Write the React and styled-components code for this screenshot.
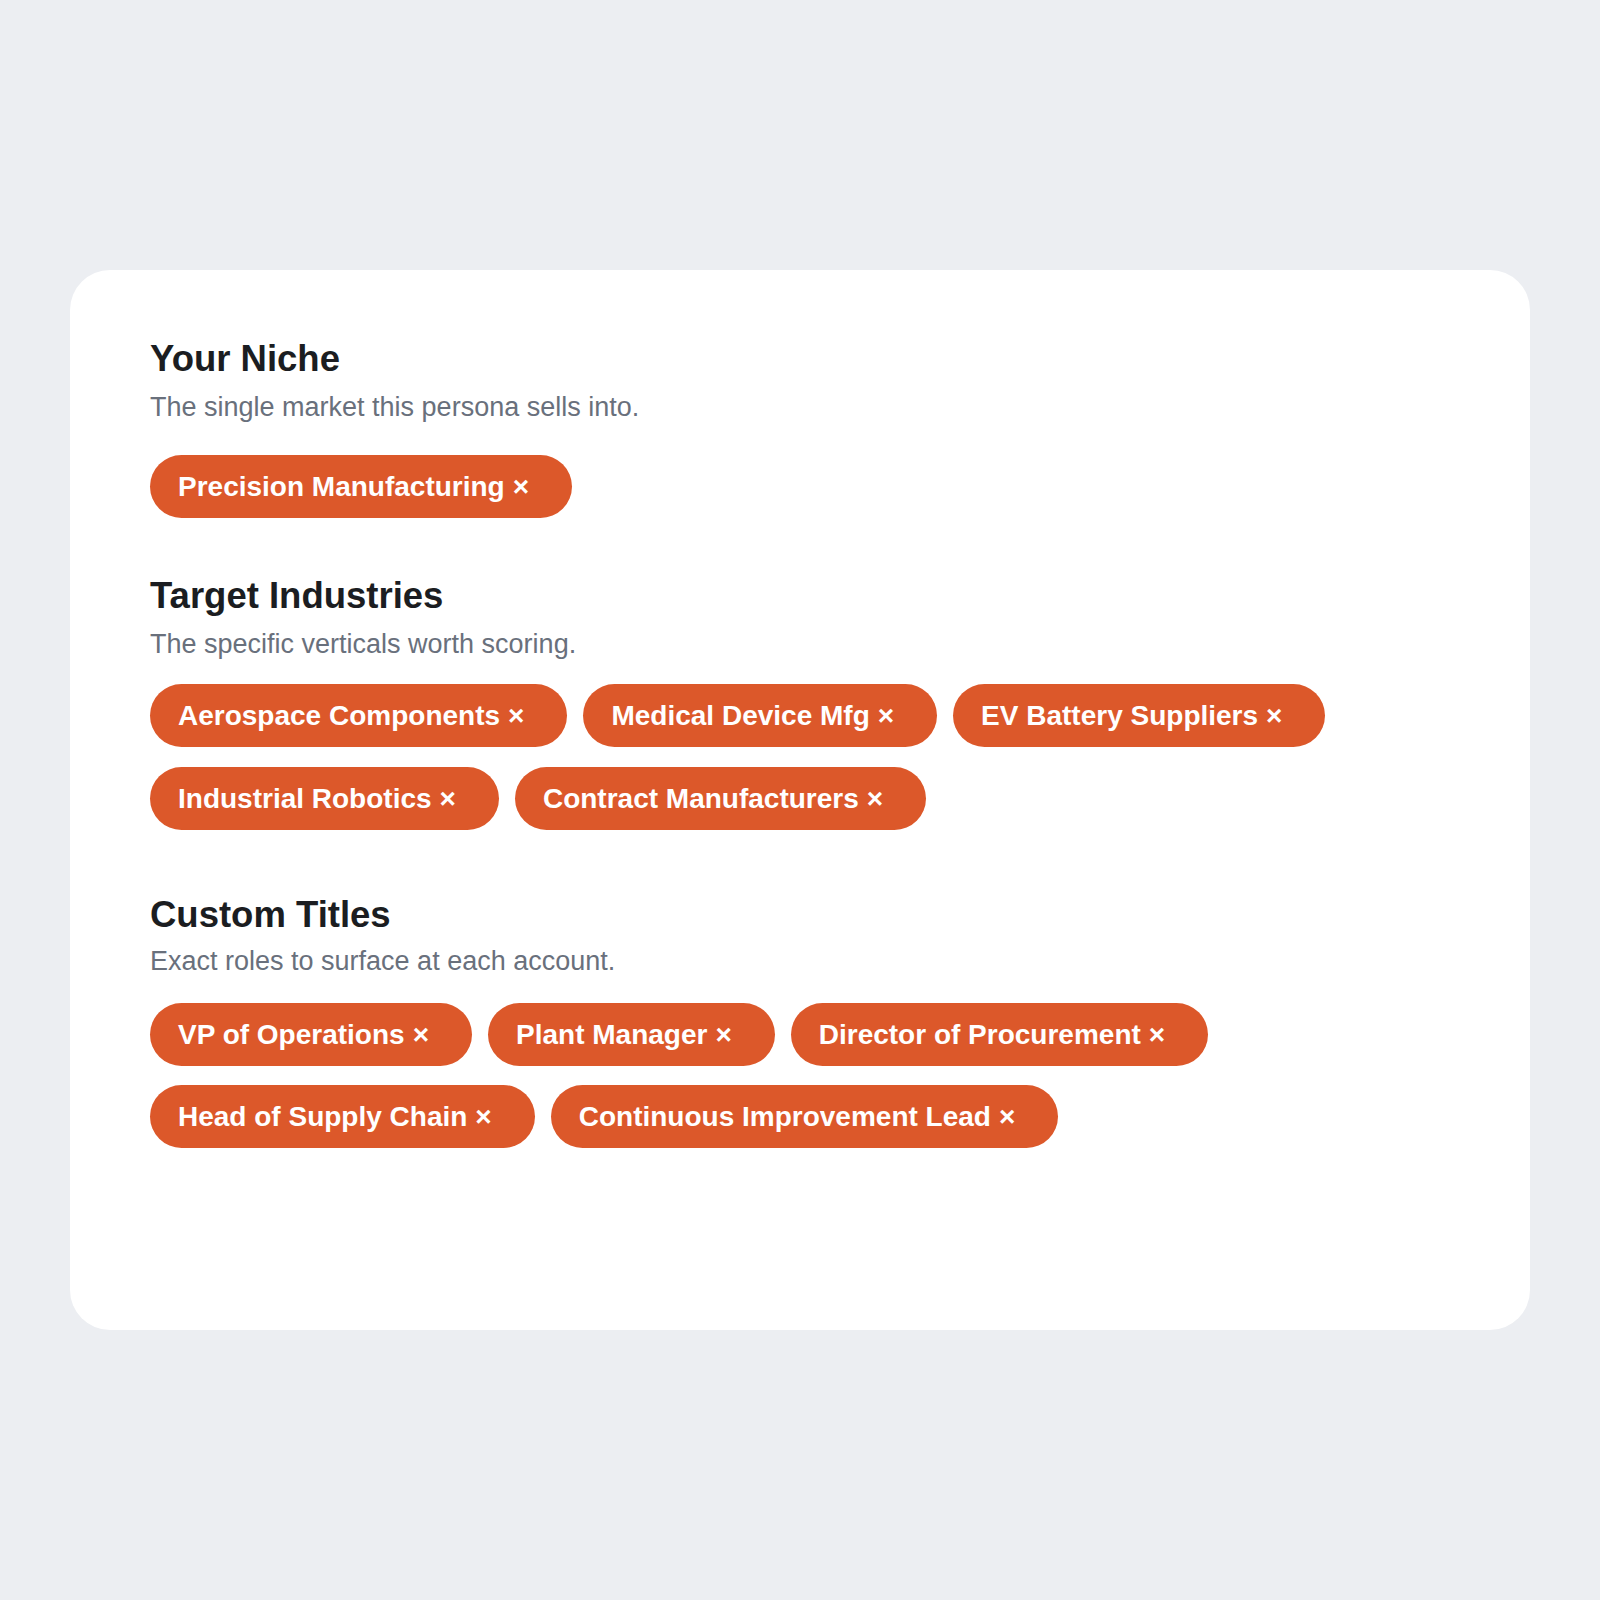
import React from "react";
import styled, { createGlobalStyle } from "styled-components";

const GlobalStyle = createGlobalStyle`
  * { box-sizing: border-box; }
  html, body { margin: 0; padding: 0; background: #eceef2; }
  body { font-family: "Liberation Sans", Arial, Helvetica, sans-serif; }
`;

const Page = styled.div`
  min-height: 1600px;
  display: flex;
  align-items: center;
  justify-content: center;
`;

const Card = styled.div`
  width: 1460px;
  min-height: 1060px;
  background: #ffffff;
  border-radius: 40px;
  padding: 67px 80px 80px;
  display: flex;
  flex-direction: column;
`;

const Section = styled.section`
  display: flex;
  flex-direction: column;
  margin-bottom: ${(p) => p.$after}px;
`;

const Title = styled.h2`
  margin: 0;
  font-size: 36.5px;
  line-height: 44px;
  font-weight: 700;
  color: #1b1d21;
`;

const Subtitle = styled.p`
  margin: ${(p) => p.$gap}px 0 0;
  font-size: 27px;
  line-height: 36px;
  font-weight: 400;
  color: #69707c;
`;

const ChipList = styled.div`
  display: flex;
  flex-wrap: wrap;
  gap: ${(p) => p.$rowGap}px 16px;
  margin-top: ${(p) => p.$top}px;
`;

const Chip = styled.span`
  display: inline-flex;
  align-items: center;
  height: 63px;
  padding: 0 43px 0 28px;
  border-radius: 999px;
  background: #dc582a;
  color: #ffffff;
  font-size: 28px;
  line-height: 35px;
  font-weight: 700;
  white-space: nowrap;
`;

const Remove = styled.button`
  all: unset;
  margin-left: 8px;
  font: inherit;
  color: inherit;
  cursor: pointer;
`;

const sections = [
  {
    title: "Your Niche",
    subtitle: "The single market this persona sells into.",
    items: ["Precision Manufacturing"],
    subGap: 8,
    top: 30,
    rowGap: 20,
    after: 56,
  },
  {
    title: "Target Industries",
    subtitle: "The specific verticals worth scoring.",
    items: [
      "Aerospace Components",
      "Medical Device Mfg",
      "EV Battery Suppliers",
      "Industrial Robotics",
      "Contract Manufacturers",
    ],
    subGap: 8,
    top: 22,
    rowGap: 20,
    after: 63,
  },
  {
    title: "Custom Titles",
    subtitle: "Exact roles to surface at each account.",
    items: [
      "VP of Operations",
      "Plant Manager",
      "Director of Procurement",
      "Head of Supply Chain",
      "Continuous Improvement Lead",
    ],
    subGap: 6,
    top: 24,
    rowGap: 19,
    after: 0,
  },
];

export default function App() {
  return (
    <>
      <GlobalStyle />
      <Page>
        <Card>
          {sections.map((s) => (
            <Section key={s.title} $after={s.after}>
              <Title>{s.title}</Title>
              <Subtitle $gap={s.subGap}>{s.subtitle}</Subtitle>
              <ChipList $top={s.top} $rowGap={s.rowGap}>
                {s.items.map((item) => (
                  <Chip key={item}>
                    {item}
                    <Remove aria-label={`Remove ${item}`}>×</Remove>
                  </Chip>
                ))}
              </ChipList>
            </Section>
          ))}
        </Card>
      </Page>
    </>
  );
}
